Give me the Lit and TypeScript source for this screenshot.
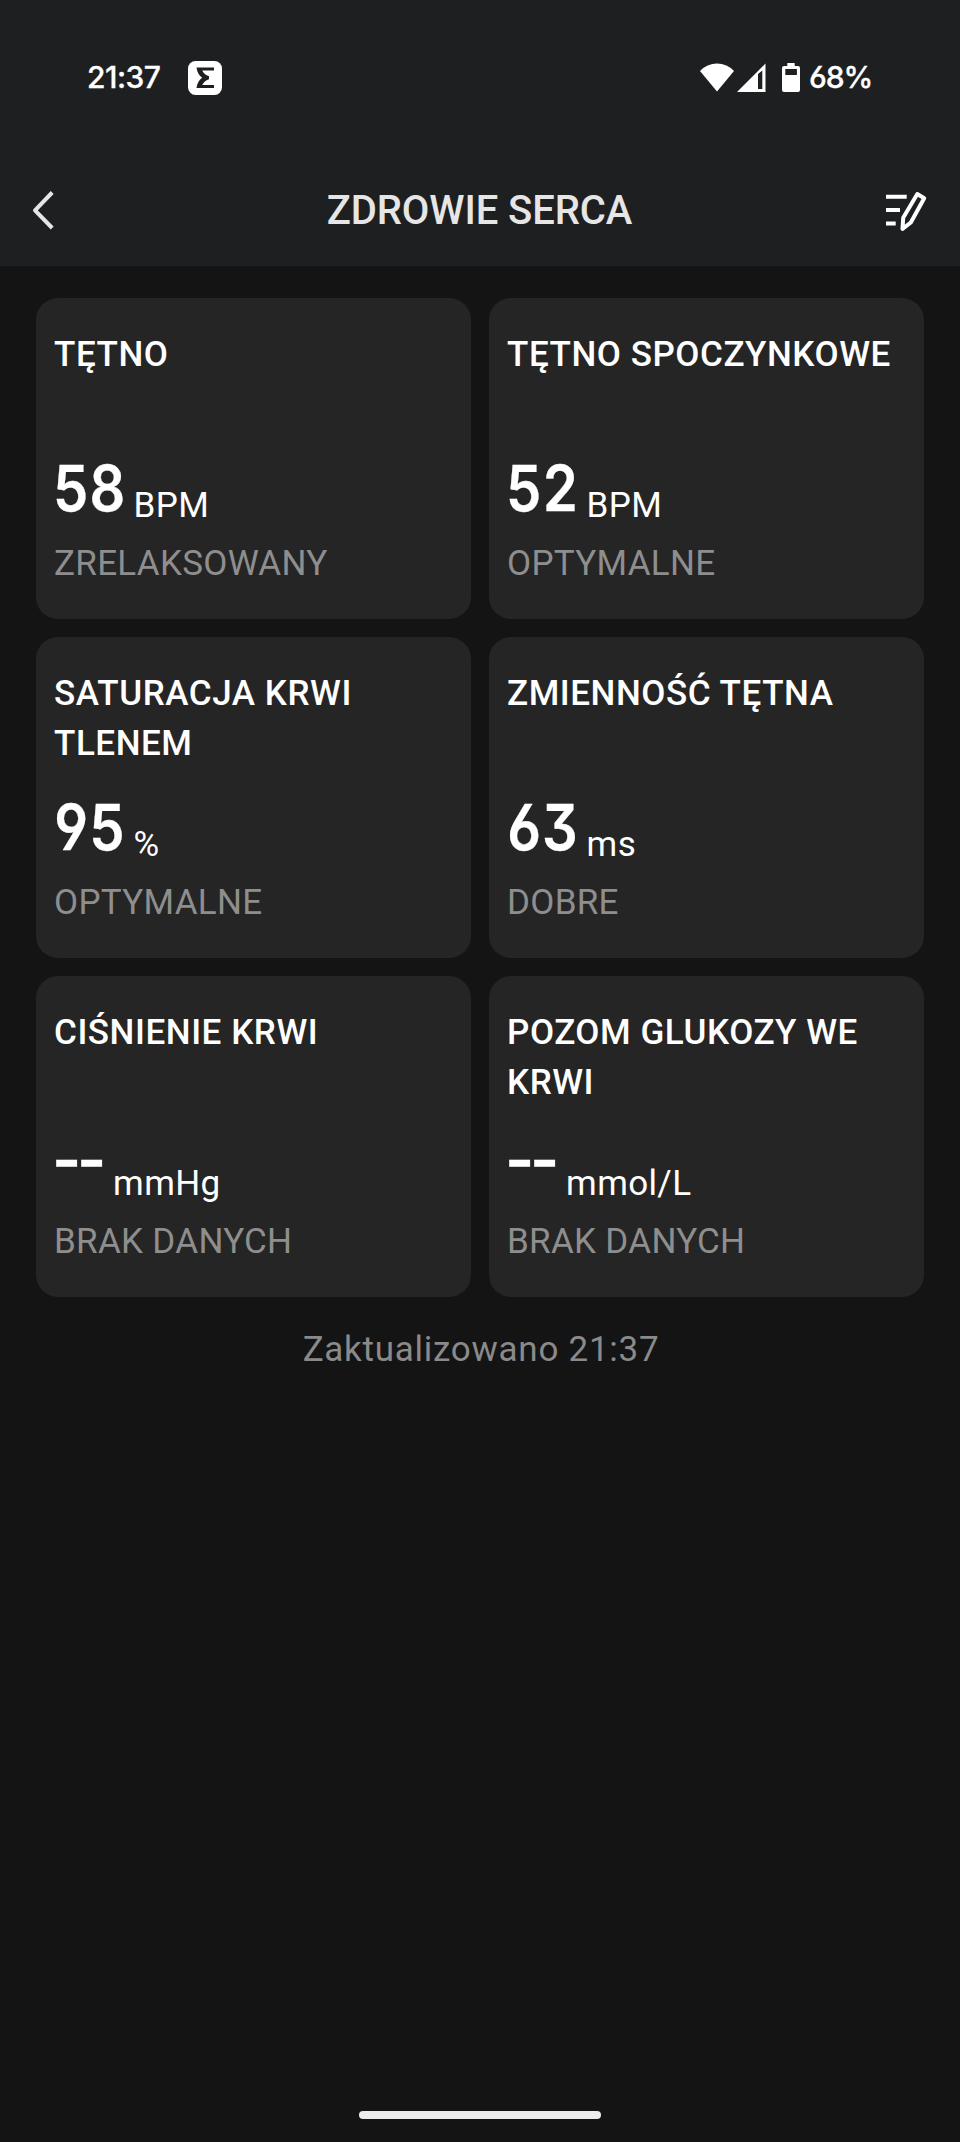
import { LitElement, html, css } from "lit";
import { customElement, property } from "lit/decorators.js";

interface Metric {
  title: string;
  value: string;
  unit: string;
  status: string;
}

const METRICS: Metric[] = [
  { title: "TĘTNO", value: "58", unit: "BPM", status: "ZRELAKSOWANY" },
  { title: "TĘTNO SPOCZYNKOWE", value: "52", unit: "BPM", status: "OPTYMALNE" },
  { title: "SATURACJA KRWI TLENEM", value: "95", unit: "%", status: "OPTYMALNE" },
  { title: "ZMIENNOŚĆ TĘTNA", value: "63", unit: "ms", status: "DOBRE" },
  { title: "CIŚNIENIE KRWI", value: "", unit: "mmHg", status: "BRAK DANYCH" },
  { title: "POZOM GLUKOZY WE KRWI", value: "", unit: "mmol/L", status: "BRAK DANYCH" },
];

@customElement("metric-card")
class MetricCard extends LitElement {
  @property({ attribute: false }) metric!: Metric;

  static styles = css`
    :host {
      display: flex;
      flex-direction: column;
      box-sizing: border-box;
      height: 321px;
      padding: 32px 18px 0;
      border-radius: 22px;
      background: #252525;
      color: #fff;
      font-family: Roboto, sans-serif;
    }
    .title {
      height: 118px;
      font-size: 35px;
      line-height: 50px;
      font-weight: 500;
      letter-spacing: 0.55px;
    }
    .reading {
      display: flex;
      align-items: flex-start;
      height: 91px;
    }
    .value {
      width: 70px;
      font-family: Inter, sans-serif;
      font-size: 63px;
      line-height: 80px;
      font-weight: 600;
      white-space: nowrap;
      -webkit-text-stroke: 0.3px #fff;
    }
    .digits {
      display: inline-block;
      font-feature-settings: "tnum", "cv03", "cv04", "cv09";
      transform: translateX(-1px) scaleX(0.89);
      transform-origin: 0 0;
    }
    .empty {
      width: 49.5px;
    }
    .empty .digits {
      font-feature-settings: "case";
      letter-spacing: -4.2px;
      transform: translate(-2px, -3px);
    }
    .unit {
      margin: 33px 0 0 9.6px;
      font-size: 35px;
      line-height: 50px;
      letter-spacing: 0.35px;
    }
    .status {
      font-size: 35px;
      line-height: 50px;
      letter-spacing: 0.3px;
      color: #8e8e8e;
    }
  `;

  render() {
    const m = this.metric;
    return html`
      <div class="title">${m.title}</div>
      <div class="reading">
        <div class="value ${m.value ? "" : "empty"}"><span class="digits">${m.value || "--"}</span></div>
        <span class="unit">${m.unit}</span>
      </div>
      <div class="status">${m.status}</div>
    `;
  }
}

@customElement("app-root")
class AppRoot extends LitElement {
  static styles = css`
    :host {
      display: flex;
      flex-direction: column;
      box-sizing: border-box;
      width: 960px;
      height: 2142px;
      background: #141414;
      font-family: Roboto, sans-serif;
      overflow: hidden;
    }
    svg {
      display: block;
      flex: none;
    }
    .top {
      flex: none;
      height: 266px;
      background: #1e1f21;
    }
    .statusbar {
      display: flex;
      align-items: center;
      box-sizing: border-box;
      height: 154px;
      padding: 0 88px 0 87px;
      color: #fff;
      font-family: Inter, sans-serif;
      font-size: 30px;
      line-height: 40px;
      font-weight: 500;
      font-feature-settings: "cv03", "cv04";
      white-space: nowrap;
      -webkit-text-stroke: 0.3px #fff;
    }
    .time {
      width: 75px;
      letter-spacing: -0.5px;
    }
    .app {
      margin: 2px 0 0 26px;
    }
    .right {
      display: flex;
      align-items: center;
      margin-left: auto;
    }
    .pct {
      width: 63px;
      margin-left: 9px;
      letter-spacing: -1.1px;
    }
    .appbar {
      display: grid;
      grid-template-columns: 1fr auto 1fr;
      align-items: center;
      height: 112px;
      box-sizing: border-box;
      padding: 0 33px 0 32px;
    }
    .heading {
      margin: 1px 0 0;
      font-size: 40px;
      line-height: 54px;
      font-weight: 500;
      letter-spacing: -0.08px;
      color: #e6e6e6;
    }
    .edit {
      justify-self: end;
    }
    .grid {
      display: grid;
      grid-template-columns: 1fr 1fr;
      gap: 18px;
      padding: 32px 36px 0;
    }
    .updated {
      margin-top: 28px;
      padding-left: 2px;
      text-align: center;
      font-size: 35px;
      line-height: 50px;
      letter-spacing: 0.73px;
      color: #8a8a8a;
    }
    .home {
      width: 242px;
      height: 8px;
      margin: auto auto 23px;
      border-radius: 4px;
      background: #ededed;
    }
  `;

  render() {
    return html`
      <header class="top">
        <div class="statusbar">
          <span class="time">21:37</span>
          <svg class="app" width="34" height="34" viewBox="0 0 34 34">
            <rect width="34" height="34" rx="7.5" fill="#fff" />
            <path
              d="M8.5 6.5H26V9.5H14.2Q16 13.5 21 15.3V18.2Q16 20 14.2 24H26V27H8.5Q9.5 20 14.2 16.8Q9.5 13.5 8.5 6.5Z"
              fill="#1e1f21"
            />
          </svg>
          <div class="right">
            <svg width="34" height="29" viewBox="0 0 34 29">
              <path d="M17 28.5L0 8Q7 0.5 17 0.5T34 8Z" fill="#fff" />
            </svg>
            <svg width="32" height="29" viewBox="0 0 32 29">
              <path d="M3 29L31.5 0.5V29ZM24 11V26H28.3V7.5Z" fill="#fff" fill-rule="evenodd" />
            </svg>
            <svg width="34" height="29" viewBox="0 0 34 29">
              <path
                d="M21.3 0h7.4v3h3.3a2 2 0 0 1 2 2v22a2 2 0 0 1-2 2H18a2 2 0 0 1-2-2V5a2 2 0 0 1 2-2h3.3zM19.3 6v6h11.6V6z"
                fill="#fff" fill-rule="evenodd"
              />
            </svg>
            <span class="pct">68%</span>
          </div>
        </div>
        <div class="appbar">
          <svg width="24" height="40" viewBox="0 0 24 40">
            <path d="M20.2 2.5L3 20.3L20.2 38" fill="none" stroke="#e6e6e6" stroke-width="4" stroke-linejoin="round" />
          </svg>
          <h1 class="heading">ZDROWIE SERCA</h1>
          <svg class="edit" width="41" height="44" viewBox="0 -2 41 44">
            <g fill="none" stroke="#fff" stroke-width="4">
              <path d="M0 6.7H20.7M0 20.1H14M0 33.6H9.7" />
              <path d="M31.3 4L38.2 8.2L24.8 32.5L16.5 38.8L17.2 27.8Z" stroke-linejoin="round" />
            </g>
          </svg>
        </div>
      </header>
      <main class="grid">
        ${METRICS.map((m) => html`<metric-card .metric=${m}></metric-card>`)}
      </main>
      <div class="updated">Zaktualizowano 21:37</div>
      <div class="home"></div>
    `;
  }
}
